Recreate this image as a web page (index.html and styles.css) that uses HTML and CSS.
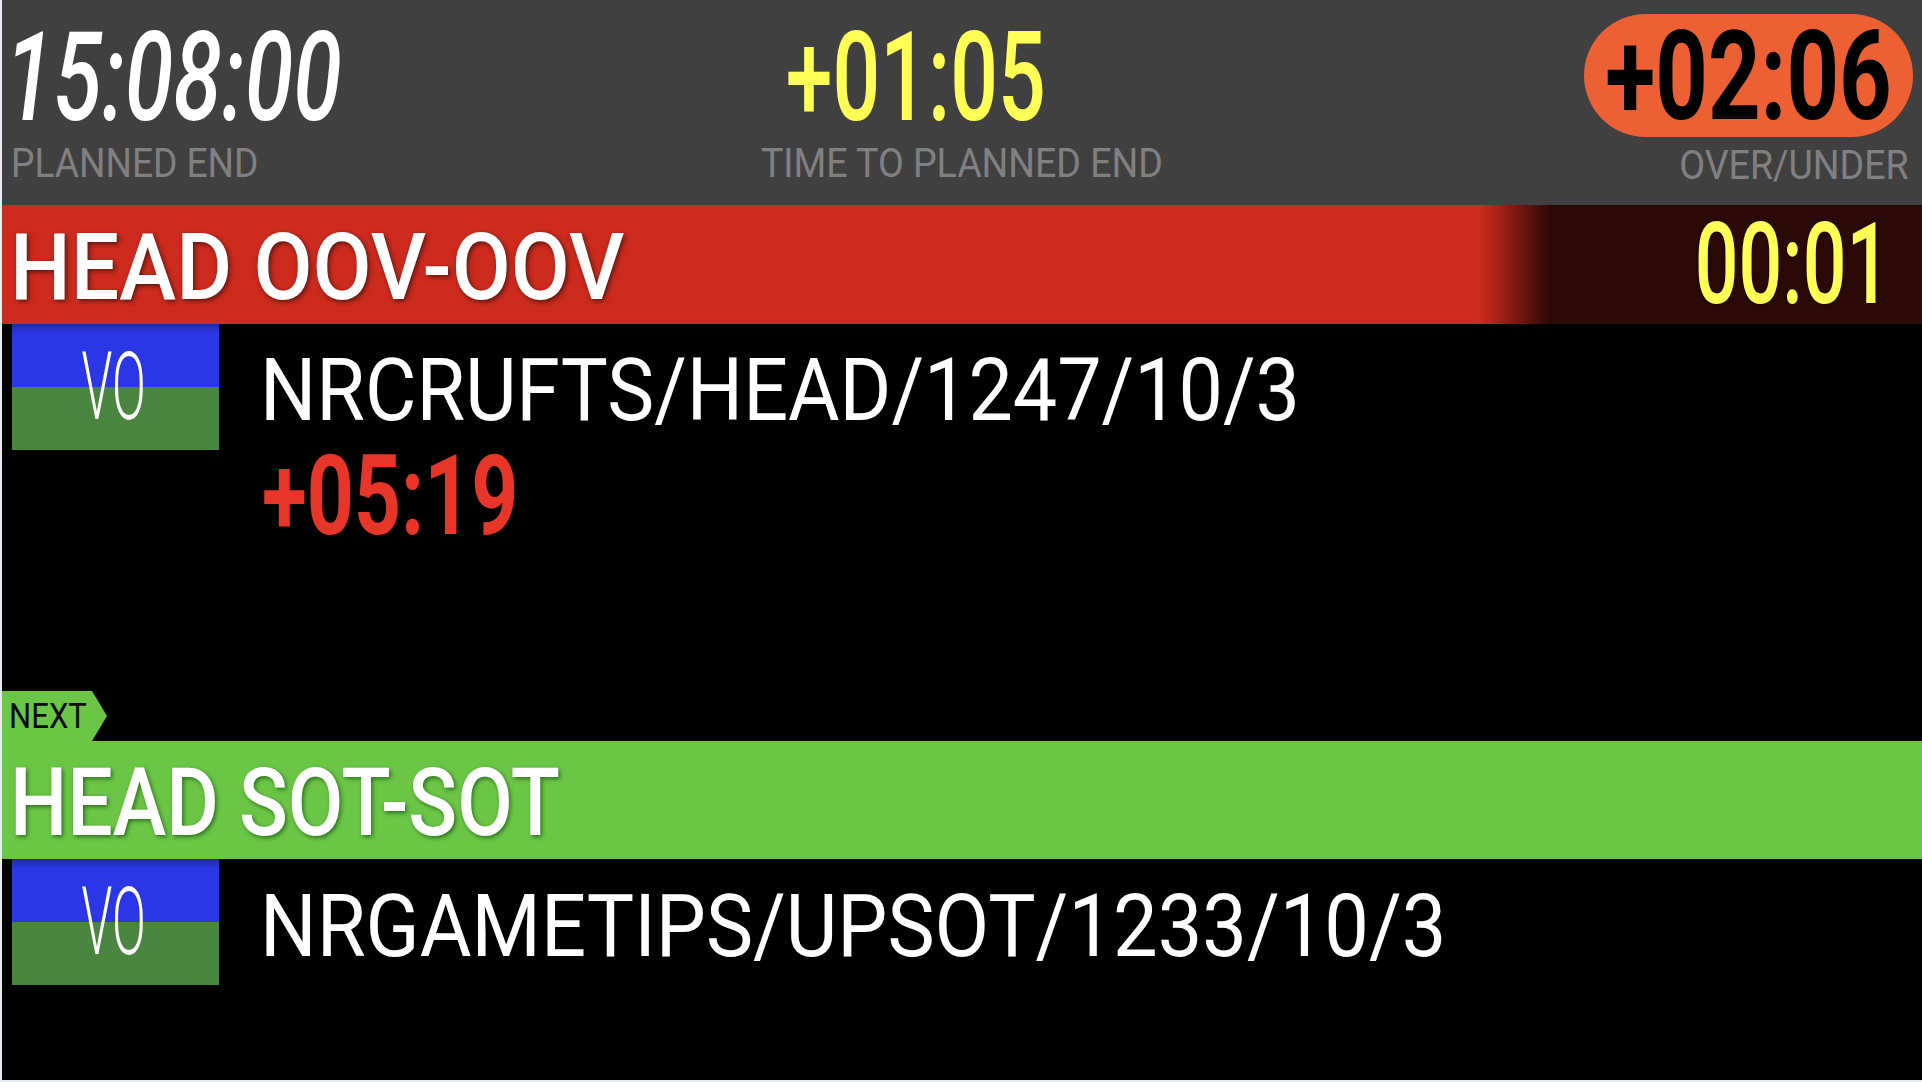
FILE: index.html
```html
<!DOCTYPE html>
<html lang="en">
<head>
<meta charset="utf-8">
<title>Rundown prompter</title>
<link rel="stylesheet" href="styles.css">
</head>
<body>
<div class="screen">
  <header class="topbar">
    <div class="stat stat-left">
      <div class="big-time t-white">15:08:00</div>
      <div class="label label-left">PLANNED END</div>
    </div>
    <div class="stat stat-center">
      <div class="big-time t-yellow">+01:05</div>
      <div class="label label-center">TIME TO PLANNED END</div>
    </div>
    <div class="stat stat-right">
      <div class="pill"><span class="pill-time">+02:06</span></div>
      <div class="label label-right">OVER/UNDER</div>
    </div>
  </header>

  <section class="segment">
    <div class="seg-bar bar-red">
      <div class="seg-title title-red">HEAD OOV-OOV</div>
      <div class="seg-timer">00:01</div>
    </div>
    <div class="seg-body body-current">
      <div class="item">
        <div class="type-box"><span class="type-text">VO</span></div>
        <div class="item-info">
          <div class="slug slug-a">NRCRUFTS/HEAD/1247/10/3</div>
          <div class="item-over">+05:19</div>
        </div>
      </div>
      <div class="next-tag"><span class="next-text">NEXT</span></div>
    </div>
  </section>

  <section class="segment">
    <div class="seg-bar bar-green">
      <div class="seg-title title-green">HEAD SOT-SOT</div>
    </div>
    <div class="seg-body body-next">
      <div class="item">
        <div class="type-box"><span class="type-text">VO</span></div>
        <div class="item-info info-next">
          <div class="slug slug-b">NRGAMETIPS/UPSOT/1233/10/3</div>
        </div>
      </div>
    </div>
  </section>
</div>
</body>
</html>
```

FILE: styles.css
```css
html, body {
  margin: 0;
  padding: 0;
}

body {
  background: #e6ecef;
  font-family: Roboto, "Liberation Sans", sans-serif;
}

.screen {
  margin-left: 2px;
  width: 1920px;
  height: 1080px;
  background: #000;
  display: flex;
  flex-direction: column;
  overflow: hidden;
}

/* ---------- top bar ---------- */
.topbar {
  height: 205px;
  flex: none;
  background: #404040;
  display: grid;
  grid-template-columns: 1fr 1fr 1fr;
}

.stat {
  display: flex;
  flex-direction: column;
}

.stat-left {
  padding: 16px 0 0 3px;
  align-items: flex-start;
}

.stat-center {
  padding-top: 16px;
  align-items: center;
}

.stat-right {
  padding: 14px 9px 0 0;
  align-items: flex-end;
}

.big-time {
  font-size: 124px;
  line-height: 1;
  height: 124px;
  white-space: nowrap;
}

.t-white {
  color: #fff;
  font-style: italic;
  font-weight: 500;
  transform: scaleX(0.709);
  transform-origin: left center;
}

.t-yellow {
  color: #ffff55;
  font-weight: 500;
  transform: scaleX(0.678);
  margin-right: 92px;
}

.label {
  font-size: 41px;
  line-height: 1;
  color: #808080;
  white-space: nowrap;
}

.label-left {
  margin: 3px 0 0 6px;
  transform: scaleX(0.905);
  transform-origin: left center;
}

.label-center {
  margin-top: 3px;
  transform: scaleX(0.914);
}

.label-right {
  margin: 8px 4px 0 0;
  transform: scaleX(0.915);
  transform-origin: right center;
}

.pill {
  width: 329px;
  height: 123px;
  box-sizing: border-box;
  padding-top: 2px;
  border-radius: 62px;
  background: #ec6034;
  display: flex;
  align-items: center;
  justify-content: center;
}

.pill-time {
  font-size: 124px;
  line-height: 1;
  font-weight: 700;
  color: #000;
  white-space: nowrap;
  transform: scaleX(0.74);
}

/* ---------- segments ---------- */
.segment {
  display: flex;
  flex-direction: column;
  flex: none;
}

.seg-bar {
  display: flex;
  justify-content: space-between;
  align-items: flex-start;
  flex: none;
}

.bar-red {
  height: 119px;
  background: linear-gradient(to right, #cd2b1e 1478px, #2b0907 1548px);
}

.bar-green {
  height: 118px;
  background: #6bc646;
}

.seg-title {
  line-height: 1;
  font-weight: 500;
  color: #fff;
  white-space: nowrap;
  transform-origin: left center;
  text-shadow: 2px 2px 5px rgba(0, 0, 0, 0.55);
}

.title-red {
  font-size: 93px;
  margin: 16px 0 0 8px;
  transform: scaleX(0.922);
}

.title-green {
  font-size: 94px;
  margin: 15px 0 0 8px;
  transform: scaleX(0.858);
  text-shadow: 2px 2px 5px rgba(0, 60, 0, 0.6);
}

.seg-timer {
  font-size: 114px;
  line-height: 1;
  font-weight: 500;
  color: #ffff55;
  margin: 2px 32px 0 0;
  white-space: nowrap;
  transform: scaleX(0.676);
  transform-origin: right center;
  text-shadow: 0 0 4px rgba(0, 0, 0, 0.5);
}

.seg-body {
  display: flex;
  flex-direction: column;
  justify-content: space-between;
}

.body-current {
  height: 417px;
}

.body-next {
  height: 221px;
}

.item {
  display: flex;
  align-items: flex-start;
}

.type-box {
  width: 207px;
  height: 126px;
  margin-left: 10px;
  flex: none;
  background: linear-gradient(to bottom, #222b9c 0, #2b36e6 9px, #2b36e6 50%, #4b8641 50%, #4b8641 100%);
  display: flex;
  align-items: center;
  justify-content: center;
}

.type-text {
  font-size: 94px;
  line-height: 1;
  font-weight: 300;
  color: #fff;
  margin-right: 4px;
  transform: scaleX(0.53);
}

.item-info {
  margin-left: 41px;
  padding-top: 23px;
}

.info-next {
  padding-top: 24px;
}

.slug {
  font-size: 87px;
  line-height: 1;
  font-weight: 400;
  color: #fff;
  white-space: nowrap;
  transform-origin: left center;
}

.slug-a {
  transform: scaleX(0.908);
}

.slug-b {
  transform: scaleX(0.913);
}

.item-over {
  font-size: 111px;
  line-height: 1;
  font-weight: 700;
  color: #e8352a;
  margin: 7px 0 0 2px;
  white-space: nowrap;
  transform: scaleX(0.74);
  transform-origin: left center;
}

.next-tag {
  width: 105px;
  height: 50px;
  background: #6bc646;
  clip-path: polygon(0 0, 90px 0, 105px 50%, 90px 100%, 0 100%);
}

.next-text {
  display: block;
  font-size: 35px;
  line-height: 1;
  color: #0a0a0a;
  padding: 8px 0 0 8px;
  white-space: nowrap;
  transform: scaleX(0.887);
  transform-origin: left center;
}
```
